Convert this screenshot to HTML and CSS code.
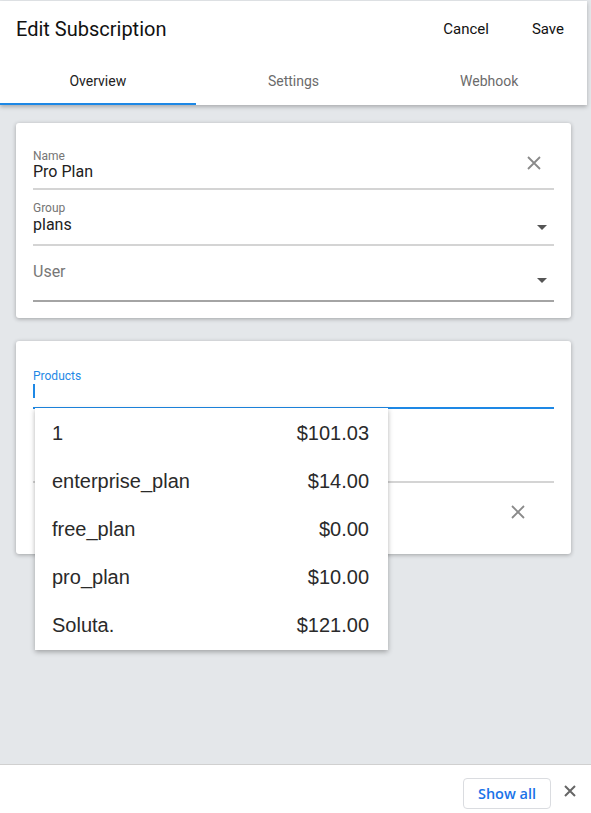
FILE: index.html
```html
<!DOCTYPE html>
<html lang="en">
<head>
    <meta charset="UTF-8">
    <meta name="viewport" content="width=device-width, initial-scale=1.0">
    <title>Edit Subscription</title>
    <link rel="stylesheet" href="styles.css">
</head>
<body>
    <div class="page">
        <div class="app">
            <div class="header">
                <div class="toolbar">
                    <h1>Edit Subscription</h1>
                    <div class="actions">
                        <a href="#">Cancel</a>
                        <a href="#">Save</a>
                    </div>
                </div>
                <div class="tabs">
                    <div class="tab active">Overview</div>
                    <div class="tab">Settings</div>
                    <div class="tab">Webhook</div>
                </div>
            </div>

            <div class="content">
                <div class="card">
                    <div class="field name-field">
                        <div class="field-text">
                            <label>Name</label>
                            <div class="value">Pro Plan</div>
                        </div>
                        <svg class="clear" width="16" height="16" viewBox="0 0 16 16"><path d="M2 2L14 14M14 2L2 14" stroke="#8a8a8a" stroke-width="1.8"/></svg>
                    </div>
                    <div class="field group-field">
                        <div class="field-text">
                            <label>Group</label>
                            <div class="value">plans</div>
                        </div>
                        <span class="arrow"></span>
                    </div>
                    <div class="field user-field">
                        <div class="field-text">
                            <div class="placeholder">User</div>
                        </div>
                        <span class="arrow"></span>
                    </div>
                </div>

                <div class="card products-card">
                    <div class="field products-field">
                        <label>Products</label>
                        <div class="cursor"></div>
                        <ul class="menu">
                            <li><span>1</span><span>$101.03</span></li>
                            <li><span>enterprise_plan</span><span>$14.00</span></li>
                            <li><span>free_plan</span><span>$0.00</span></li>
                            <li><span>pro_plan</span><span>$10.00</span></li>
                            <li><span>Soluta.</span><span>$121.00</span></li>
                        </ul>
                    </div>
                    <div class="field quantity-field"></div>
                    <div class="remove-row">
                        <svg class="clear" width="16" height="16" viewBox="0 0 16 16"><path d="M2 2L14 14M14 2L2 14" stroke="#8a8a8a" stroke-width="1.8"/></svg>
                    </div>
                </div>
            </div>
        </div>

        <div class="footer">
            <button class="show-all">Show all</button>
            <svg class="close" width="12" height="12" viewBox="0 0 12 12"><path d="M1 1L11 11M11 1L1 11" stroke="#666" stroke-width="2"/></svg>
        </div>
    </div>
</body>
</html>
```

FILE: styles.css
```css
body {
    margin: 0;
    padding: 0;
    background-color: #e4e7ea;
    font-family: Roboto, "Liberation Sans", Arial, sans-serif;
}
.page {
    height: 813px;
    display: flex;
    flex-direction: column;
    overflow: hidden;
}
.app {
    width: 587px;
    flex: 1;
    padding-top: 1px;
}
.header {
    background-color: #fff;
    box-shadow: 0 2px 4px rgba(0, 0, 0, 0.25);
    position: relative;
    z-index: 1;
}
.toolbar {
    height: 56px;
    display: flex;
    align-items: center;
    justify-content: space-between;
    padding: 0 23px 0 16px;
}
.toolbar h1 {
    margin: 0;
    font-size: 20px;
    font-weight: 400;
    color: #111;
}
.actions {
    display: flex;
    gap: 43px;
}
.actions a {
    font-size: 15px;
    color: #111;
    text-decoration: none;
}
.tabs {
    display: flex;
}
.tab {
    flex: 1;
    display: flex;
    align-items: center;
    justify-content: center;
    font-size: 14px;
    color: #6b6b6b;
    border-bottom: 2px solid transparent;
    padding-top: 2px;
    box-sizing: border-box;
    height: 48px;
}
.tab.active {
    color: #222;
    border-bottom-color: #1e88e5;
}
.content {
    padding: 18px 16px 0 16px;
}
.card {
    background-color: #fff;
    border-radius: 3px;
    box-shadow: 0 1px 4px rgba(0, 0, 0, 0.3);
    padding: 0 17px 16px 17px;
    margin-bottom: 23px;
    position: relative;
}
.field {
    display: flex;
    align-items: flex-start;
    border-bottom: 2px solid #d4d4d4;
    position: relative;
}
.field-text {
    flex: 1;
}
.field label {
    display: block;
    font-size: 12px;
    line-height: 13px;
    color: #757575;
}
.value {
    font-size: 16px;
    line-height: 19px;
    color: #212121;
}
.placeholder {
    font-size: 16px;
    line-height: 19px;
    color: #777;
}
.name-field {
    padding-top: 27px;
    padding-bottom: 8px;
}
.name-field .value {
    line-height: 17px;
}
.name-field .clear {
    margin: 5px 12px 0 0;
}
.group-field {
    padding-top: 12px;
    padding-bottom: 10px;
}
.user-field {
    padding-top: 16px;
    padding-bottom: 19px;
    border-bottom-color: #a4a4a4;
}
.arrow {
    width: 0;
    height: 0;
    border-left: 5px solid transparent;
    border-right: 5px solid transparent;
    border-top: 5px solid #555;
    margin: 0 7px 0 0;
    align-self: flex-end;
}
.group-field .arrow {
    margin-bottom: 4px;
}
.user-field .arrow {
    margin-bottom: -2px;
}
.products-card {
    z-index: 0;
}
.products-field {
    display: block;
    padding-top: 28px;
    padding-bottom: 9px;
    border-bottom-color: #1e88e5;
}
.products-field label {
    color: #1e88e5;
    line-height: 14px;
}
.cursor {
    width: 2px;
    height: 14px;
    background-color: #1e88e5;
    margin-top: 1px;
}
.menu {
    position: absolute;
    top: 100%;
    left: 2px;
    width: 353px;
    margin: 1px 0 0 0;
    padding: 1px 0;
    list-style: none;
    background-color: #fff;
    box-shadow: 0 2px 5px rgba(0, 0, 0, 0.3);
    z-index: 5;
    font-family: "Liberation Sans", Arial, sans-serif;
}
.menu li {
    height: 48px;
    display: flex;
    align-items: center;
    justify-content: space-between;
    padding: 0 19px 0 17px;
    font-size: 20px;
    color: #2a2a2a;
}
.quantity-field {
    height: 72px;
}
.remove-row {
    height: 53px;
    display: flex;
    align-items: center;
    justify-content: flex-end;
    padding-right: 28px;
    padding-top: 2px;
}
.footer {
    height: 48px;
    background-color: #fff;
    border-top: 1px solid #d0d0d0;
    display: flex;
    align-items: center;
    justify-content: flex-end;
    padding-right: 15px;
    gap: 13px;
    flex-shrink: 0;
}
.show-all {
    width: 88px;
    height: 31px;
    margin-top: 9px;
    background-color: #fff;
    border: 1px solid #dadce0;
    border-radius: 4px;
    font-family: "Open Sans", "Noto Sans", sans-serif;
    font-size: 14.5px;
    font-weight: 600;
    color: #1a73e8;
    padding: 0;
}
.close {
    margin-top: 4px;
}
```
